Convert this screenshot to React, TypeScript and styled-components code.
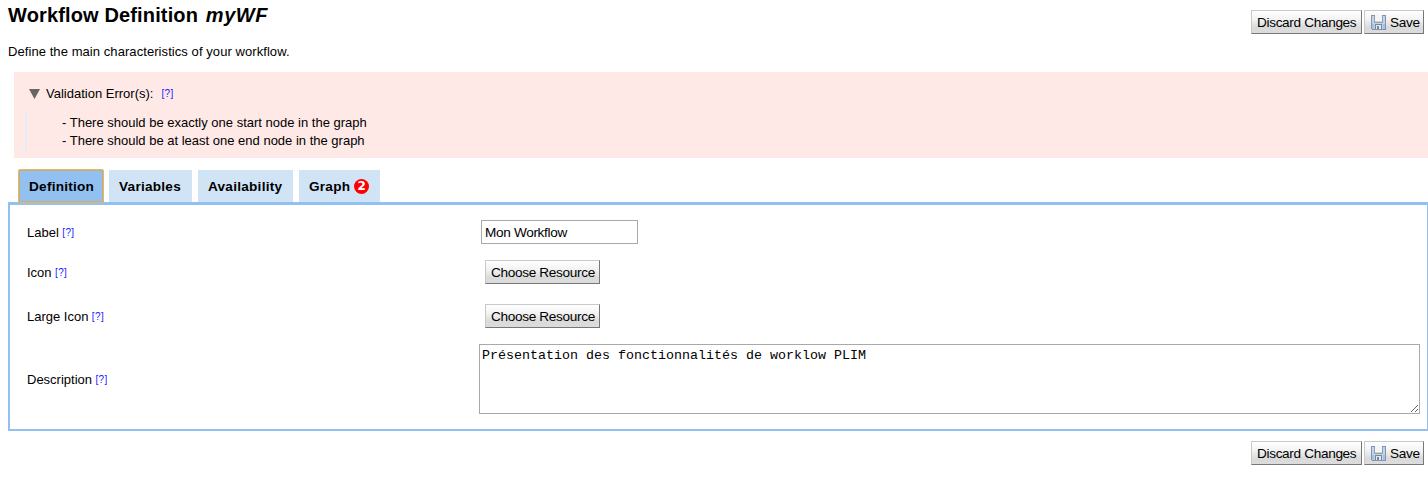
import React from "react";
import styled, { createGlobalStyle } from "styled-components";

const sans = '"Liberation Sans", Arial, sans-serif';

const GlobalStyle = createGlobalStyle`
  * { box-sizing: border-box; }
  html, body { margin: 0; background: #fff; overflow: hidden; }
  body { font: 13px/18px ${sans}; color: #000; }
`;

const Page = styled.main`
  width: 1428px;
  height: 481px;
  display: flex;
  flex-direction: column;
  padding-left: 8px;
`;

const Header = styled.header`
  height: 72px;
  display: flex;
  justify-content: space-between;
  padding-right: 4px;
`;

const Title = styled.h1`
  margin: 3px 0 0;
  height: 24px;
  font-size: 20px;
  line-height: 24px;
  font-weight: bold;
  letter-spacing: 0.14px;

  em {
    margin-left: 2px;
    letter-spacing: 0.6px;
  }
`;

const Intro = styled.p`
  margin: 16px 0 0;
  letter-spacing: 0.07px;
`;

const Actions = styled.div<{ $top: number }>`
  display: flex;
  justify-content: flex-end;
  gap: 2px;
  padding-top: ${(p) => p.$top}px;
`;

const Button = styled.button<{ $width: number }>`
  width: ${(p) => p.$width}px;
  height: 24px;
  padding: 1px 0 0 5px;
  display: flex;
  align-items: center;
  gap: 4px;
  white-space: nowrap;
  border: 1px solid;
  border-color: #c9c9c9 #777 #777 #c9c9c9;
  border-radius: 0;
  background: linear-gradient(#fff, #f2f2f2 40%, #dadada 75%, #dcdcdc);
  color: #000;
  font: 13.6px/20px ${sans};
  letter-spacing: -0.33px;
`;

const Errors = styled.section`
  height: 86px;
  margin-left: 6px;
  padding: 12px 0 0 11px;
  background: #fee9e7;
`;

const ErrorTitle = styled.div`
  height: 20px;
  display: flex;
  align-items: center;
  padding-left: 4px;
`;

const Triangle = styled.svg`
  width: 11px;
  height: 10px;
  margin-right: 6px;
`;

const ErrorList = styled.ul`
  list-style: none;
  height: 44px;
  margin: 5px 0 0;
  padding: 5px 0 0 35px;
  border-left: 2px solid #e6edf9;
`;

const Help = styled.a<{ $gap?: number }>`
  margin-left: ${(p) => p.$gap ?? 3.4}px;
  color: #1a1aff;
  font-size: 10px;
  line-height: 14px;
  letter-spacing: 0.4px;
`;

const Tabs = styled.nav`
  height: 44px;
  display: flex;
  align-items: flex-end;
  padding-left: 10px;
`;

const Tab = styled.div<{ $width: number; $active?: boolean }>`
  width: ${(p) => p.$width}px;
  height: ${(p) => (p.$active ? 34 : 32)}px;
  margin-bottom: ${(p) => (p.$active ? -1 : 0)}px;
  margin-right: ${(p) => (p.$active ? 5 : 6)}px;
  position: relative;
  z-index: 1;
  display: flex;
  align-items: center;
  padding: 1px 0 0 10px;
  background: ${(p) => (p.$active ? "#92c0f0" : "#d0e4f5")};
  border: ${(p) => (p.$active ? "1px solid #e2b765" : "none")};
  outline: ${(p) => (p.$active ? "1px solid #c2ae7f" : "none")};
  outline-offset: -2px;
  border-radius: ${(p) => (p.$active ? 2 : 0)}px;
  font-size: 13.6px;
  font-weight: bold;
  letter-spacing: 0.25px;
`;

const Badge = styled.span`
  width: 15px;
  height: 15px;
  margin-left: 4px;
  border-radius: 50%;
  background: #f00;
  color: #fff;
  font: bold 12px/15px "DejaVu Sans", sans-serif;
  letter-spacing: 0;
  text-align: center;
`;

const Panel = styled.section`
  height: 229px;
  border: 2px solid #92c0f0;
  border-top-width: 3px;
  border-right-width: 1px;
  padding: 7px 7px 0 17px;
`;

const Row = styled.div<{ $height: number }>`
  height: ${(p) => p.$height}px;
  display: grid;
  grid-template-columns: 452px 1fr;
  align-items: center;
`;

const Label = styled.div`
  display: flex;
  align-items: center;
  padding-top: 1px;
`;

const Field = styled.div<{ $indent: number }>`
  display: flex;
  padding-left: ${(p) => p.$indent}px;
`;

const Input = styled.input`
  width: 157px;
  height: 24px;
  padding: 1px 3px 0;
  border: 1px solid #a9a9a9;
  border-radius: 0;
  outline: 0;
  font: 13.6px/20px ${sans};
  letter-spacing: -0.33px;
`;

const TextArea = styled.textarea`
  display: block;
  width: 941px;
  height: 70px;
  padding: 3px 2px;
  border: 1px solid #a9a9a9;
  border-radius: 0;
  outline: 0;
  resize: both;
  font: 13.333px/15px "Liberation Mono", monospace;
`;

const Footer = styled.footer`
  padding-right: 4px;
`;

const Disk = styled.svg`
  flex: none;
  width: 15px;
  height: 15px;
  margin-left: 1px;
`;

const DiskIcon = () => (
  <Disk viewBox="0 0 15 15" shapeRendering="crispEdges">
    <path d="M0 0h15v15H1l-1-1z" fill="#7c96bb" />
    <path d="M1 1h13v13H1z" fill="#c3d4ea" />
    <path d="M3 1h9v7H3z" fill="#8fa3bc" />
    <path d="M4 0h7v6H4z" fill="#f3f6f8" />
    <path d="M4 6h7v1H4z" fill="#e1d4a5" />
    <path d="M4 9h7v5H4z" fill="#758799" />
    <path d="M5 10h5v4H5z" fill="#e4e8ed" />
    <path d="M6 11h2v3H6z" fill="#7e8790" />
    <path d="M1 9h2v5H1zM12 9h2v5h-2z" fill="#a5c0e3" />
  </Disk>
);

const ActionBar = ({ top }: { top: number }) => (
  <Actions $top={top}>
    <Button $width={111}>Discard Changes</Button>
    <Button $width={60}>
      <DiskIcon />
      Save
    </Button>
  </Actions>
);

export default function App() {
  return (
    <>
      <GlobalStyle />
      <Page>
        <Header>
          <div>
            <Title>Workflow Definition <em>myWF</em></Title>
            <Intro>Define the main characteristics of your workflow.</Intro>
          </div>
          <ActionBar top={10} />
        </Header>
        <Errors>
          <ErrorTitle>
            <Triangle viewBox="0 0 11 10"><path d="M0 0h11L5.5 10z" fill="#666" /></Triangle>
            Validation Error(s):
            <Help $gap={8}>[?]</Help>
          </ErrorTitle>
          <ErrorList>
            <li>- There should be exactly one start node in the graph</li>
            <li>- There should be at least one end node in the graph</li>
          </ErrorList>
        </Errors>
        <Tabs>
          <Tab $width={86} $active>Definition</Tab>
          <Tab $width={83}>Variables</Tab>
          <Tab $width={95}>Availability</Tab>
          <Tab $width={81}>Graph<Badge>2</Badge></Tab>
        </Tabs>
        <Panel>
          <Row $height={40}>
            <Label>Label<Help>[?]</Help></Label>
            <Field $indent={2}><Input defaultValue="Mon Workflow" /></Field>
          </Row>
          <Row $height={40}>
            <Label>Icon<Help>[?]</Help></Label>
            <Field $indent={6}><Button $width={115}>Choose Resource</Button></Field>
          </Row>
          <Row $height={48}>
            <Label>Large Icon<Help>[?]</Help></Label>
            <Field $indent={6}><Button $width={115}>Choose Resource</Button></Field>
          </Row>
          <Row $height={78}>
            <Label>Description<Help>[?]</Help></Label>
            <Field $indent={0}>
              <TextArea spellCheck={false} defaultValue="Présentation des fonctionnalités de worklow PLIM" />
            </Field>
          </Row>
        </Panel>
        <Footer><ActionBar top={10} /></Footer>
      </Page>
    </>
  );
}
